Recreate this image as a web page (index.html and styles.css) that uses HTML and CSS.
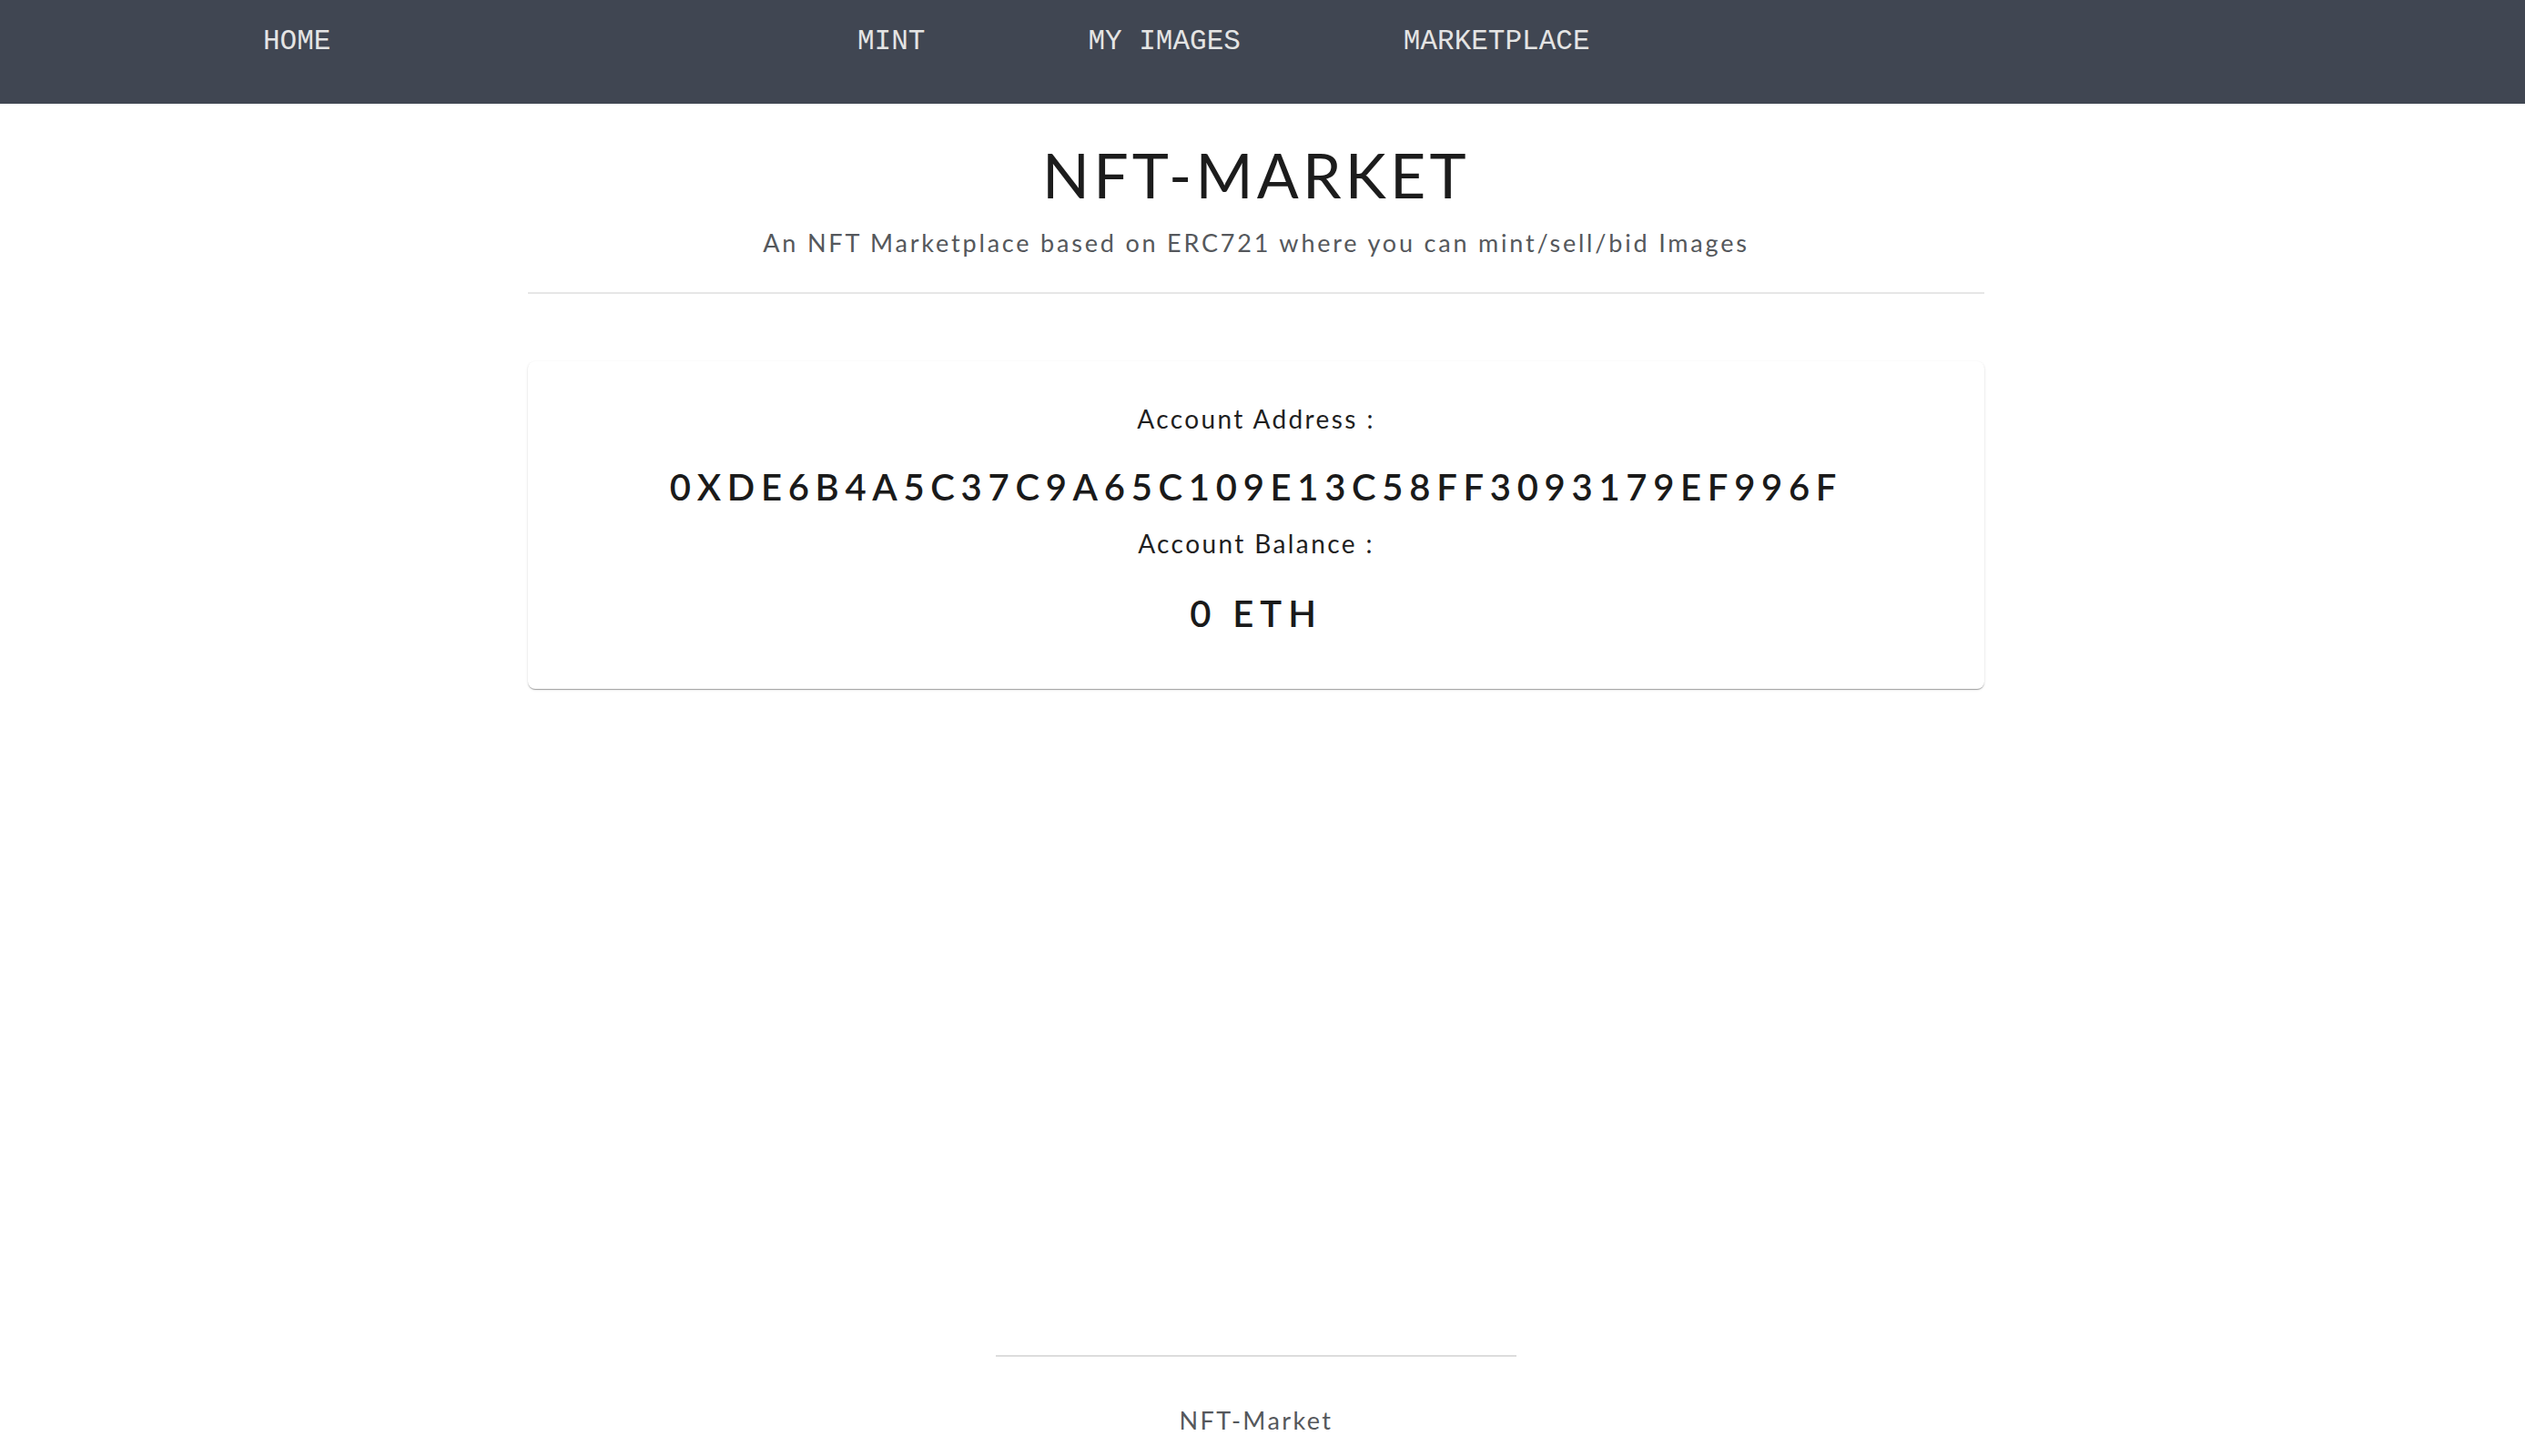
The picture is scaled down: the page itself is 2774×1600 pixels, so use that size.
FILE: index.html
```html
<!DOCTYPE html>
<html lang="en">
<head>
<meta charset="utf-8">
<title>NFT-Market</title>
<link rel="stylesheet" href="styles.css">
</head>
<body>
<nav class="navbar">
  <a class="nav-link brand" href="#">HOME</a>
  <div class="nav-menu">
    <a class="nav-link" href="#">MINT</a>
    <a class="nav-link" href="#">MY IMAGES</a>
    <a class="nav-link" href="#">MARKETPLACE</a>
  </div>
</nav>
<main class="main">
  <header class="hero">
    <h1 class="title">NFT-MARKET</h1>
    <p class="subtitle">An NFT Marketplace based on ERC721 where you can mint/sell/bid Images</p>
  </header>
  <section class="card">
    <p class="label">Account Address :</p>
    <p class="value address">0XDE6B4A5C37C9A65C109E13C58FF3093179EF996F</p>
    <p class="label label-second">Account Balance :</p>
    <p class="value balance">0 ETH</p>
  </section>
</main>
<footer class="footer">
  <div class="footer-rule"></div>
  <p class="footer-text">NFT-Market</p>
</footer>
</body>
</html>
```
FILE: styles.css
```css
* { box-sizing: border-box; }
html, body { margin: 0; padding: 0; }
body {
  min-height: 100vh;
  display: flex;
  flex-direction: column;
  background: #ffffff;
  font-family: "Lato", "Open Sans", sans-serif;
  color: #1c1c1c;
}
p, h1 { margin: 0; }

.navbar {
  height: 114px;
  background: #404652;
  display: flex;
  align-items: flex-start;
  padding: 31px 0 0 289px;
}
.nav-link {
  font-family: "Liberation Mono", "Courier New", monospace;
  font-size: 31px;
  line-height: 30px;
  color: #e4e4e4;
  text-decoration: none;
  white-space: nowrap;
}
.brand { width: 653px; }
.nav-menu {
  display: flex;
  gap: 179px;
}

.main {
  width: 100%;
  padding-right: 14px;
  display: flex;
  flex-direction: column;
  align-items: center;
}
.hero {
  width: 1600px;
  padding-top: 44px;
  padding-bottom: 41px;
  border-bottom: 2px solid #e6e6e6;
  text-align: center;
}
.title {
  font-size: 68px;
  line-height: 68px;
  font-weight: 400;
  letter-spacing: 4.2px;
  color: #1c1c1c;
}
.subtitle {
  margin-top: 27px;
  font-size: 27px;
  line-height: 27px;
  letter-spacing: 2.8px;
  color: #55585c;
}

.card {
  width: 1600px;
  margin-top: 74px;
  padding: 49px 0 63px;
  border-radius: 8px;
  background: #fff;
  box-shadow: 0 2px 1px -1px rgba(0,0,0,0.2), 0 1px 1px 0 rgba(0,0,0,0.14), 0 1px 3px 0 rgba(0,0,0,0.12);
  display: flex;
  flex-direction: column;
  align-items: center;
  text-align: center;
}
.label {
  font-size: 28px;
  line-height: 28px;
  letter-spacing: 2.4px;
  color: #1f1f1f;
}
.label-second { margin-top: 28px; }
.value {
  font-size: 40px;
  line-height: 40px;
  font-weight: 600;
  color: #1a1a1a;
}
.address { margin-top: 41px; letter-spacing: 6.7px; }
.balance { margin-top: 43px; letter-spacing: 7px; }

.footer {
  margin-top: auto;
  padding-right: 14px;
  padding-bottom: 26px;
  display: flex;
  flex-direction: column;
  align-items: center;
}
.footer-rule {
  width: 572px;
  border-top: 2px solid #dcdcdc;
}
.footer-text {
  margin-top: 56px;
  font-size: 27px;
  line-height: 27px;
  letter-spacing: 2.4px;
  color: #55585c;
}
```
